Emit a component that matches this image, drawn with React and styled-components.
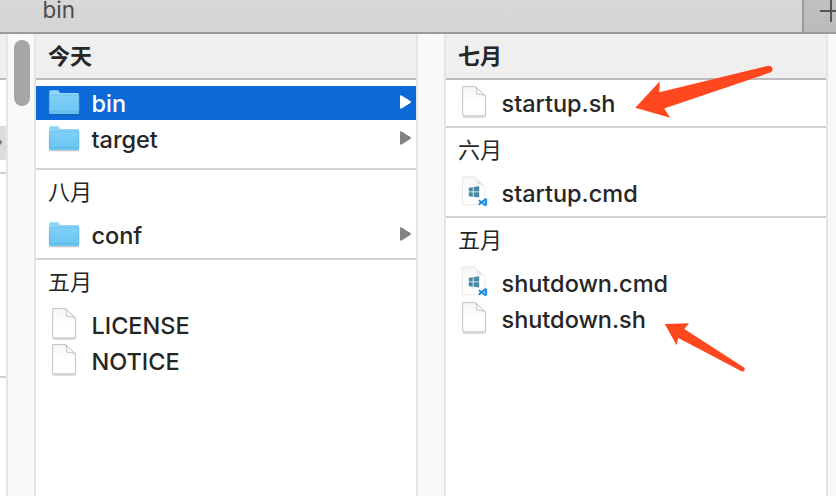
import React from "react";
import styled, { createGlobalStyle, css } from "styled-components";

const GlobalStyle = createGlobalStyle`
  * { box-sizing: border-box; }
  body { margin: 0; overflow: hidden; background: #fff; }
`;

const Window = styled.div`
  position: relative;
  width: 836px;
  height: 496px;
  display: flex;
  flex-direction: column;
  overflow: hidden;
  background: #fff;
  color: #262626;
  font-family: Inter, "Noto Sans CJK SC", sans-serif;
`;

const TabBar = styled.header`
  flex: none;
  display: flex;
  height: 34px;
  border-bottom: 2px solid #9b999b;
  background: linear-gradient(#d9d8d9, #d5d3d5);
`;

const Tab = styled.div`
  width: 802px;
  padding-left: 42.5px;
  color: #4d4c4d;
  font-size: 22.5px;
  line-height: 20px;
`;

const NewTab = styled.div`
  flex: 1;
  overflow: hidden;
  border-left: 2px solid #9b999b;
  background: linear-gradient(#c2c1c2, #bbb9bb);
  svg { display: block; }
`;

const Columns = styled.main`
  flex: 1;
  display: flex;
  min-height: 0;
`;

const Column = styled.section`
  flex: none;
  width: ${(p) => p.$width}px;
  overflow: hidden;
`;

const Gutter = styled.div`
  flex: none;
  width: 30px;
  padding: 6px;
  border: solid #e5e5e5;
  border-width: 0 2px;
  background: linear-gradient(90deg, #f8f8f8, #fafafa 60%, #f8f8f8);
`;

const Thumb = styled.div`
  width: 16px;
  height: 66px;
  border-radius: 8px;
  background: #a6a6a6;
`;

const Group = styled.div`
  padding-bottom: ${(p) => p.$end ?? 6}px;
  ${(p) => !p.$last && css`border-bottom: 2px solid #d3d3d3;`}
`;

const Heading = styled.h2`
  height: ${(p) => (p.$pinned ? 46 : 48)}px;
  margin: 0 0 ${(p) => (p.$pinned ? 6 : 0)}px;
  padding-left: 12px;
  font-family: "Noto Sans CJK SC", sans-serif;
  font-size: 22px;
  line-height: 40px;
  font-weight: ${(p) => (p.$pinned ? 700 : 400)};
  ${(p) => p.$pinned && css`
    background: #efefef;
    border-bottom: 2px solid #bcbcbc;
  `}
`;

const Row = styled.div`
  display: flex;
  align-items: center;
  height: 34px;
  padding: 0 4px 0 12px;
  color: ${(p) => (p.$selected ? "#fff" : "#262626")};
  background: ${(p) => (p.$selected ? "#0d69d8" : "transparent")};
  & + & { margin-top: 2px; }
`;

const Icon = styled.svg`
  flex: none;
  display: block;
  width: 32px;
  height: 34px;
  margin-top: -2px;
`;

const Name = styled.span`
  flex: 1;
  margin: 2px 0 0 11.5px;
  font-size: 23.5px;
  font-weight: 450;
  line-height: 34px;
  letter-spacing: -0.02px;
  white-space: nowrap;
`;

const Chevron = styled.svg`
  flex: none;
  width: 14px;
  height: 18px;
  margin-top: -2px;
`;

const SliverHead = styled.div`
  height: 46px;
  background: #efefef;
  border-bottom: 2px solid #bcbcbc;
`;

const SliverRow = styled.div`
  height: 94px;
  padding-top: 46px;
  border-bottom: 2px solid #d3d3d3;
  svg { display: block; background: #dcdcdc; }
`;

const SliverBlank = styled.div`
  height: 204px;
  border-bottom: 2px solid #d3d3d3;
`;

const Annotations = styled.svg`
  position: absolute;
  inset: 0;
  pointer-events: none;
`;

const FolderIcon = () => (
  <Icon viewBox="0 0 32 34">
    <path d="M1 29.5h30" stroke="#345" strokeOpacity=".3" strokeWidth="1.5" />
    <path d="M1.3 27V6.7Q1.3 5.3 2.7 5.3H9.5Q10.7 5.3 11.3 6.6L12 8H29.5Q31 8 31 9.5V27.5Q31 28.8 29.7 28.8H2.6Q1.3 28.8 1.3 27.5Z" fill="#8dd5f9" />
    <path d="M1.3 10.5H31V27.5Q31 28.8 29.7 28.8H2.6Q1.3 28.8 1.3 27.5Z" fill="url(#folder-front)" />
    <path d="M1.3 10.3H31" stroke="#64bee8" strokeWidth=".8" />
    <path d="M1.5 26.9H30.8" stroke="#58b3df" strokeWidth=".8" />
    <path d="M1.4 10.5V27.5M30.9 10.5V27.5" stroke="#56b3df" strokeWidth=".7" />
  </Icon>
);

const PageIcon = () => (
  <Icon viewBox="0 0 32 34">
    <path d="M5 32H27.5" stroke="#777" strokeOpacity=".35" strokeWidth="1.4" />
    <path d="M4.6 1.6H17.5L27.5 11.2V30.8H4.6Z" fill="url(#paper)" stroke="#bdbdbd" strokeWidth=".9" strokeLinejoin="round" />
    <path d="M17.5 1.6Q19.5 4.5 18.6 9.2Q24 8.8 27.5 11.2Z" fill="#fcfcfc" stroke="#bdbdbd" strokeWidth=".9" strokeLinejoin="round" />
  </Icon>
);

const CmdIcon = () => (
  <Icon viewBox="0 0 32 34">
    <path d="M4.4 1.8H16.8L26.8 11.7V29.8H4.4Z" fill="url(#paper)" stroke="#e4e4e4" strokeWidth=".8" />
    <path d="M16.2 1.8L26.8 12.3Q24 8.7 19 9.2Q18.9 4.1 16.2 1.8Z" fill="url(#fold)" />
    <path d="M10.8 12.7L14.8 12.2V16.6H10.8ZM15.6 12L21.2 11.3V16.6H15.6ZM10.8 17.3H14.8V21.8L10.8 21.3ZM15.6 17.3H21.2V22.5L15.6 21.8Z" fill="#4789a5" />
    <path d="M27 24.5L21.4 29L20.8 28.5M20.8 25.1L27 30.1" fill="none" stroke="#1686ce" strokeWidth="1.8" />
    <path d="M26.5 22.8L29.2 23.9V30.3L26.5 31.4Z" fill="#2196e8" />
  </Icon>
);

const icons = { folder: FolderIcon, page: PageIcon, cmd: CmdIcon };

function Item({ kind, name, selected }) {
  const Glyph = icons[kind];
  return (
    <Row $selected={selected}>
      <Glyph />
      <Name>{name}</Name>
      {kind === "folder" && (
        <Chevron viewBox="0 0 14 18">
          <path d="M2 3.4V14.6Q2 16.3 3.5 15.5L12.4 10Q13.6 9 12.4 8L3.5 2.5Q2 1.7 2 3.4Z" fill={selected ? "#fff" : "#828282"} />
        </Chevron>
      )}
    </Row>
  );
}

function FileColumn({ groups }) {
  return (
    <Column $width={380}>
      {groups.map((g, i) => (
        <Group key={g.label} $end={g.end} $last={i === groups.length - 1}>
          <Heading $pinned={i === 0}>{g.label}</Heading>
          {g.items.map((it) => <Item key={it.name} {...it} />)}
        </Group>
      ))}
    </Column>
  );
}

const parentGroups = [
  { label: "今天", end: 12, items: [
    { kind: "folder", name: "bin", selected: true },
    { kind: "folder", name: "target" },
  ] },
  { label: "八月", items: [{ kind: "folder", name: "conf" }] },
  { label: "五月", items: [
    { kind: "page", name: "LICENSE" },
    { kind: "page", name: "NOTICE" },
  ] },
];

const binGroups = [
  { label: "七月", items: [{ kind: "page", name: "startup.sh" }] },
  { label: "六月", items: [{ kind: "cmd", name: "startup.cmd" }] },
  { label: "五月", items: [
    { kind: "cmd", name: "shutdown.cmd" },
    { kind: "page", name: "shutdown.sh" },
  ] },
];

export default function App() {
  return (
    <Window>
      <GlobalStyle />
      <TabBar>
        <Tab>bin</Tab>
        <NewTab>
          <svg width="32" height="32" viewBox="0 0 32 32">
            <path d="M16 11H38M27 0V22" stroke="#555" strokeWidth="2" />
          </svg>
        </NewTab>
      </TabBar>
      <Columns>
        <Column $width={6}>
          <SliverHead />
          <SliverRow>
            <svg width="6" height="34" viewBox="0 0 6 34">
              <path d="M0 13.5L2 15.5V17L0 19Z" fill="#777" />
            </svg>
          </SliverRow>
          <SliverBlank />
        </Column>
        <Gutter><Thumb /></Gutter>
        <FileColumn groups={parentGroups} />
        <Gutter />
        <FileColumn groups={binGroups} />
        <Gutter />
      </Columns>
      <Annotations width="836" height="496" viewBox="0 0 836 496">
        <defs>
          <linearGradient id="folder-front" x2="0" y2="1">
            <stop stopColor="#80d0f6" />
            <stop offset="1" stopColor="#68c4f4" />
          </linearGradient>
          <linearGradient id="paper" x2="0" y2="1">
            <stop stopColor="#f5f5f5" />
            <stop offset=".5" stopColor="#fff" />
          </linearGradient>
          <linearGradient id="fold" y2="1">
            <stop stopColor="#f4f4f4" />
            <stop offset="1" stopColor="#d2d2d2" />
          </linearGradient>
        </defs>
        <g fill="#ff4720">
          <path d="M635.3 107.8L659.8 81.3L659.3 92.2L768.2 65.7Q771.5 65.2 772.6 68.2Q773.2 71.2 770.4 72.5L664.2 108.6L670.2 117.8Z" />
          <path d="M664.8 324L689 323.2L684.4 329L744 367.5Q746 370 743 371.5L741.5 371.2L678.3 338L676.6 345.2Z" />
        </g>
      </Annotations>
    </Window>
  );
}
